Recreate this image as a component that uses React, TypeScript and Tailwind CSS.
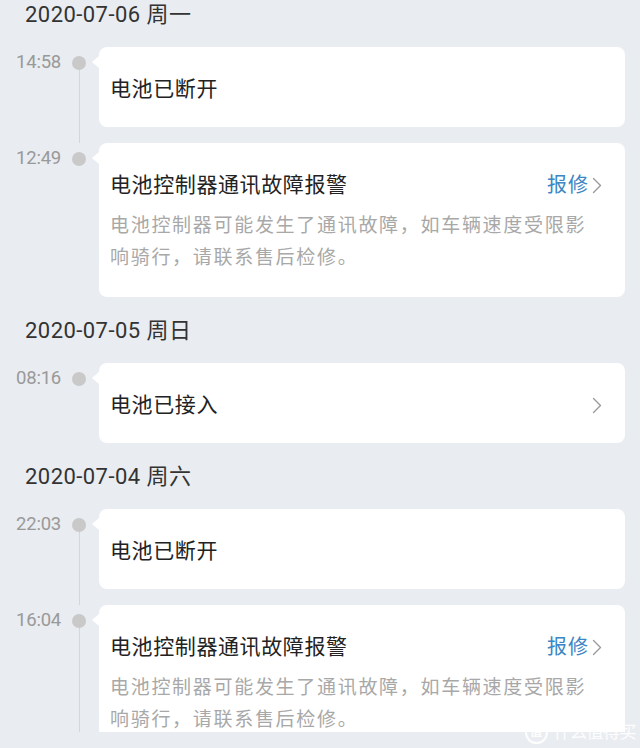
import type { ReactNode } from "react";

type Entry = {
	time: string;
	title: string;
	desc?: string[];
	action?: "repair" | "more";
};

type Section = { date: string; entries: Entry[]; more?: boolean };

const alarm: Entry = {
	time: "",
	title: "电池控制器通讯故障报警",
	desc: ["电池控制器可能发生了通讯故障，如车辆速度受限影", "响骑行，请联系售后检修。"],
	action: "repair",
};

const sections: Section[] = [
	{
		date: "2020-07-06 周一",
		entries: [
			{ time: "14:58", title: "电池已断开" },
			{ ...alarm, time: "12:49" },
		],
	},
	{
		date: "2020-07-05 周日",
		entries: [{ time: "08:16", title: "电池已接入", action: "more" }],
	},
	{
		date: "2020-07-04 周六",
		more: true,
		entries: [
			{ time: "22:03", title: "电池已断开" },
			{ ...alarm, time: "16:04" },
		],
	},
];

function Chevron() {
	return (
		<svg width="10" height="17" viewBox="0 0 10 17" fill="none">
			<path d="M1.5 1.5 L8.5 8.5 L1.5 15.5" stroke="#9a9a9a" strokeWidth="1.4" strokeLinecap="round" strokeLinejoin="round" />
		</svg>
	);
}

function Card({ entry }: { entry: Entry }) {
	let right: ReactNode = null;
	if (entry.action === "repair") {
		right = (
			<div className="flex items-center gap-[3px]">
				<span className="text-[20px] text-[#3b86c4] tracking-[1px]">报修</span>
				<Chevron />
			</div>
		);
	} else if (entry.action === "more") {
		right = <Chevron />;
	}

	return (
		<div className="relative flex-1 mr-[15px] bg-white rounded-[8px] pl-[11px] pr-[23px] pt-[28px] pb-[24px]">
			<div className="absolute -left-[7px] top-[9px] w-0 h-0 border-y-[6px] border-y-transparent border-r-[7px] border-r-white" />
			<div className="flex items-center justify-between h-[28px]">
				<span className="text-[21px] tracking-[0.6px] text-[#222] leading-[28px]">{entry.title}</span>
				{right}
			</div>
			{entry.desc && (
				<div className="mt-[11px] -mb-px text-[19px] leading-[32px] tracking-[1.7px] text-[#a8a8a8]">
					{entry.desc.map((line) => (
						<div key={line} className="whitespace-nowrap">
							{line}
						</div>
					))}
				</div>
			)}
		</div>
	);
}

function Row({ entry, line, tail }: { entry: Entry; line: boolean; tail: boolean }) {
	return (
		<div className="flex">
			<div className="relative w-[99px] shrink-0">
				{line && <div className="absolute left-[79px] top-[15px] -bottom-4 w-px bg-[#d3d6db]" />}
				{tail && <div className="absolute left-[79px] top-[15px] h-[400px] w-px bg-[#d3d6db]" />}
				<div className="relative flex items-center h-[30px] pt-px pl-4">
					<span className="w-[46px] text-[18.5px] text-[#999] tracking-[-0.2px]">{entry.time}</span>
					<span className="ml-[10px] w-[14px] h-[14px] rounded-full bg-[#c9c9c9]" />
				</div>
			</div>
			<Card entry={entry} />
		</div>
	);
}

export default function App() {
	return (
		<div
			className="relative w-[640px] h-[748px] overflow-hidden bg-[#e9ecf0]"
			style={{ fontFamily: 'Roboto, "Noto Sans CJK SC", sans-serif' }}
		>
			<div className="h-[732px] overflow-hidden">
				<div className="-mt-[18px]">
					{sections.map((s, si) => (
						<div key={s.date}>
							<div
								className={
									si === 0
										? "h-[65px] flex items-center pl-[25px] text-[22px] tracking-[0.45px] text-[#333]"
										: "h-[66px] pt-px flex items-center pl-[25px] text-[22px] tracking-[0.45px] text-[#333]"
								}
							>
								{s.date}
							</div>
							<div className="flex flex-col gap-4">
								{s.entries.map((e, i) => (
									<Row
										key={e.time}
										entry={e}
										line={i < s.entries.length - 1}
										tail={!!s.more && i === s.entries.length - 1}
									/>
								))}
							</div>
						</div>
					))}
				</div>
			</div>

			{/* site watermark */}
			<div className="absolute right-[4px] bottom-[3px] flex items-center gap-[6px] text-white/90">
				<span className="w-[23px] h-[23px] rounded-full border-2 border-white/90 flex items-center justify-center text-[12px] font-bold">
					值
				</span>
				<span className="text-[17px] tracking-[-0.5px]">什么值得买</span>
			</div>
		</div>
	);
}
